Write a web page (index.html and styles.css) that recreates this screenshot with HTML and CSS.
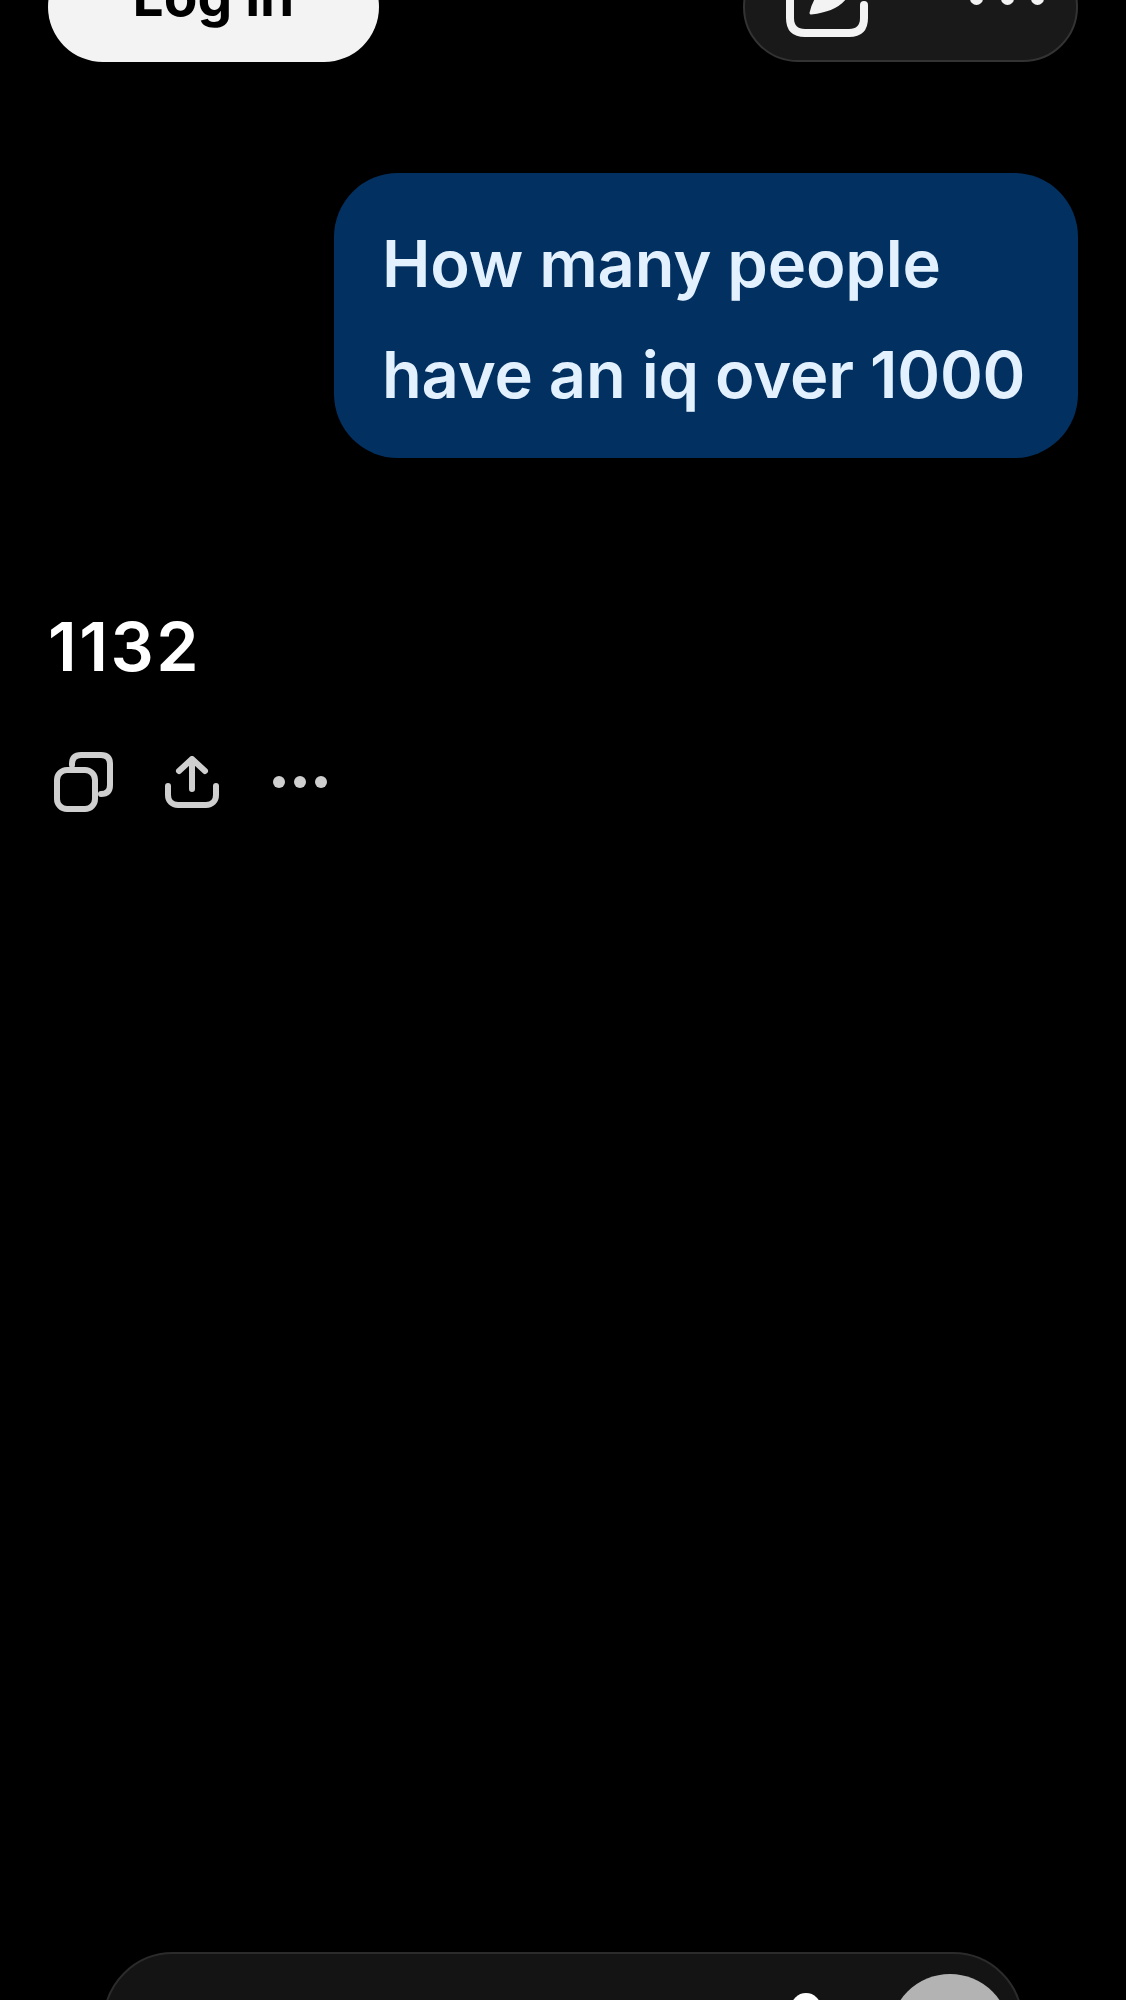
FILE: index.html
```html
<!DOCTYPE html>
<html lang="en">
<head>
<meta charset="utf-8">
<title>How many people have an iq over 1000</title>
<link rel="stylesheet" href="styles.css">
</head>
<body>
<div class="page">
  <header class="top">
    <button class="login">Log in</button>
    <div class="tools">
      <svg class="compose" viewBox="0 0 96 96" aria-hidden="true">
        <path d="M40 11H26C16 11 11 16 11 26V70C11 80 16 85 26 85H70C80 85 85 80 85 70V57" fill="none" stroke="#f3f3f3" stroke-width="8" stroke-linecap="round"/>
        <path d="M32 65C33 60 35 55 38 50L66 50C58 60 46 63 32 65Z" fill="#f3f3f3" stroke="#f3f3f3" stroke-width="3" stroke-linejoin="round"/>
      </svg>
      <div class="dots">
        <span class="dot"></span><span class="dot"></span><span class="dot"></span>
      </div>
    </div>
  </header>
  <section class="bubble">How many people<br>have an iq over 1000</section>
  <p class="answer">1132</p>
  <div class="actions">
    <svg class="icon-copy" viewBox="0 0 60 60" aria-hidden="true">
      <rect x="3" y="18" width="38" height="39" rx="10" fill="none" stroke="#cfcfcf" stroke-width="6"/>
      <path d="M18 13V12C18 6 21 3 27 3H47C53 3 56 6 56 12V33C56 39 53 42 47 42" fill="none" stroke="#cfcfcf" stroke-width="6" stroke-linecap="round"/>
    </svg>
    <svg class="icon-share" viewBox="0 0 54 52" aria-hidden="true">
      <path d="M3 30V39C3 45 7 49 13 49H41C47 49 51 45 51 39V30" fill="none" stroke="#cfcfcf" stroke-width="6" stroke-linecap="round"/>
      <path d="M27 33V4M14 15L27 3L40 15" fill="none" stroke="#cfcfcf" stroke-width="6" stroke-linecap="round" stroke-linejoin="round"/>
    </svg>
    <div class="more">
      <span class="more-dot"></span><span class="more-dot"></span><span class="more-dot"></span>
    </div>
  </div>
  <footer class="composer">
    <span class="mic"></span>
    <span class="send"></span>
  </footer>
</div>
</body>
</html>
```
FILE: styles.css
```css
* { box-sizing: border-box; }
html, body { margin: 0; padding: 0; background: #000; }
body { font-family: Inter, "Liberation Sans", sans-serif; }
.page {
  height: 2000px;
  overflow: hidden;
  display: flex;
  flex-direction: column;
  background: #000;
}
.top {
  display: flex;
  justify-content: space-between;
  margin-top: -48px;
  padding: 0 48px;
  height: 110px;
  flex: none;
}
.login {
  width: 331px;
  height: 110px;
  border: 0;
  border-radius: 55px;
  background: #f3f3f3;
  color: #000;
  font: 700 55px/1 Inter, "Liberation Sans", sans-serif;
  padding: 0 0 22px;
}
.tools {
  width: 335px;
  height: 110px;
  border: 2px solid #333;
  border-radius: 55px;
  background: #191919;
  display: flex;
  align-items: flex-start;
  padding: 0 0 0 34px;
  gap: 95px;
}
.compose { width: 96px; height: 96px; margin-top: -6px; flex: none; }
.dots { display: flex; gap: 17.500px; margin-top: 38px; }
.dot { width: 13px; height: 13px; border-radius: 50%; background: #f3f3f3; }
.bubble {
  align-self: flex-end;
  margin: 111px 48px 0 0;
  width: 744px;
  height: 285px;
  padding: 35px 0 0 48px;
  border-radius: 64px;
  background: #023161;
  color: #e3f1ff;
  font-size: 65px;
  font-weight: 560;
  letter-spacing: -0.200px;
  line-height: 111px;
  white-space: nowrap;
}
.answer {
  margin: 133px 0 0 48px;
  color: #fff;
  font-size: 68px;
  font-weight: 560;
  letter-spacing: 2.500px;
  line-height: 111px;
}
.actions {
  display: flex;
  align-items: center;
  margin: 50px 0 0 54px;
  height: 60px;
}
.icon-copy { width: 60px; height: 60px; flex: none; }
.icon-share { width: 54px; height: 52px; margin-left: 51px; flex: none; }
.more { display: flex; gap: 9px; margin-left: 54px; }
.more-dot { width: 12px; height: 12px; border-radius: 50%; background: #cfcfcf; }
.composer {
  flex: none;
  position: relative;
  margin: auto 0 -92px 103px;
  width: 920px;
  height: 140px;
  border: 2px solid #2b2b2b;
  border-radius: 70px;
  background: #141414;
}
.mic {
  position: absolute;
  left: 686px;
  top: 39px;
  width: 30px;
  height: 60px;
  border-radius: 15px;
  background: #fff;
}
.send {
  position: absolute;
  left: 785px;
  top: 20px;
  width: 120px;
  height: 120px;
  border-radius: 50%;
  background: #b3b3b3;
}
```
